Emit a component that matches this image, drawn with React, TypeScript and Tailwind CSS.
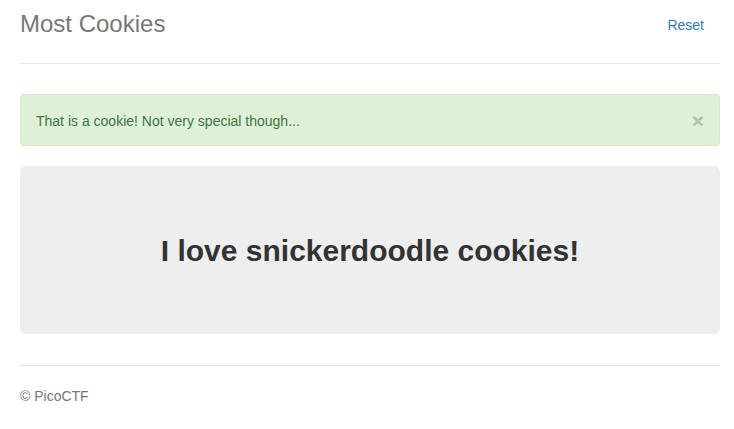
export default function App() {
  return (
    <div className="min-h-screen bg-white font-['Liberation_Sans',Arial,sans-serif] text-[14px] leading-[20px] text-[#333]">
      <div className="ml-5 w-[700px]">
        {/* Header */}
        <div className="flex h-[64px] items-start justify-between border-b border-[#e5e5e5] pt-[4px]">
          <h3 className="text-[24px] leading-[40px] text-[#777]">Most Cookies</h3>
          <nav className="mr-[1px] pt-[1px]">
            <a className="block px-[15px] py-[10px] text-[#337ab7]" href="#">Reset</a>
          </nav>
        </div>

        {/* Alert */}
        <div className="mt-[30px] flex h-[52px] items-center justify-between rounded border border-[#d6e9c6] bg-[#dff0d8] px-[15px] pt-[2px] text-[#3c763d]">
          <span>That is a cookie! Not very special though...</span>
          <button className="text-[21px] font-bold leading-[20px] text-black opacity-20">×</button>
        </div>

        {/* Jumbotron */}
        <div className="mt-5 flex h-[168px] items-center justify-center rounded-md bg-[#eee]">
          <h1 className="pt-[2px] text-[30px] font-bold text-[#333]">I love snickerdoodle cookies!</h1>
        </div>

        {/* Footer */}
        <footer className="mt-[31px] border-t border-[#e5e5e5] pt-[20px] text-[#777]">
          <p>© PicoCTF</p>
        </footer>
      </div>
    </div>
  );
}
